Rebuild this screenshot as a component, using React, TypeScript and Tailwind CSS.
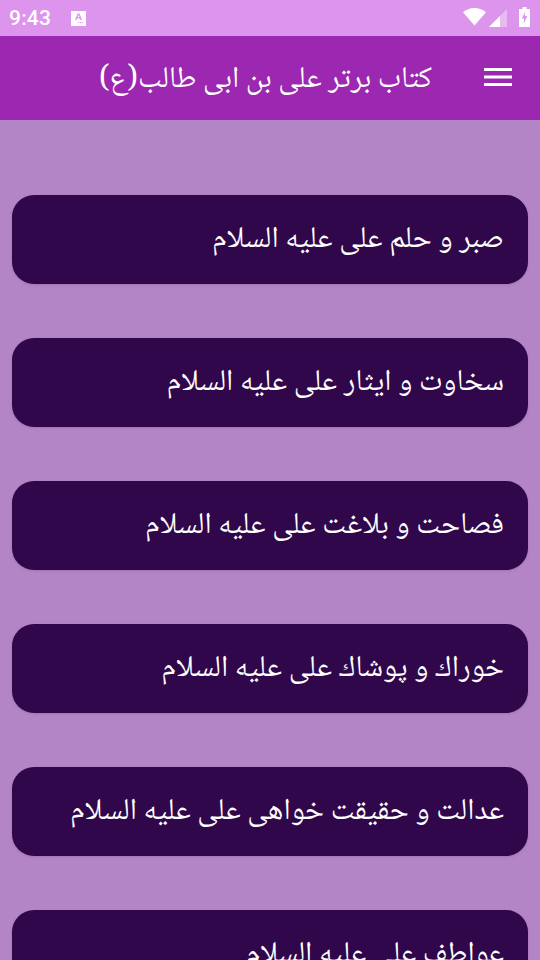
const items = [
  "صبر و حلم علی علیه السلام",
  "سخاوت و ایثار علی علیه السلام",
  "فصاحت و بلاغت علی علیه السلام",
  "خوراك و پوشاك علی علیه السلام",
  "عدالت و حقیقت خواهی علی علیه السلام",
  "عواطف علی علیه السلام",
];

export default function App() {
  return (
    <div className="h-[960px] w-[540px] overflow-hidden bg-[#b485c6] font-['Noto_Naskh_Arabic','DejaVu_Sans',serif]">
      <div className="flex h-9 items-center justify-between bg-[#dd94ec] pl-[9px] pr-[10px] text-white">
        <div className="flex items-center">
          <span className="font-['Roboto',sans-serif] text-[21px] font-medium leading-none tracking-[0.2px]">9:43</span>
          <svg width="15" height="16" viewBox="0 0 15 16" className="ml-[20px]">
            <path fill="#fff" d="M0 1h15v15H0z" />
            <path fill="#dd94ec" d="M6.500 3.500h2L11 10H9.500L9 8.600H6L5.500 10H4zM6.500 7.300h2L7.500 4.800z" />
            <path fill="#dd94ec" d="M7 12h1v1H7zM9 12h1v1H9zM11 12h1v1h-1z" />
          </svg>
        </div>
        <div className="flex items-center">
          <svg width="23" height="18" viewBox="0 0 23 18" className="mb-[2px]">
            <path fill="#fff" d="M11.500 17.500 0 4.300C3 1.700 7 0 11.500 0S20 1.700 23 4.300z" />
          </svg>
          <svg width="18" height="18" viewBox="0 0 18 18" className="ml-[3px]">
            <path fill="#fff" fillOpacity="0.35" d="M18 0v18H0z" />
            <path fill="#fff" d="M11 7v11H0z" />
          </svg>
          <svg width="11" height="20" viewBox="0 0 11 20" className="mb-[2px] ml-[12px]">
            <path fill="#fff" d="M3.500 0h4v2H11v18H0V2h3.500z" />
            <path fill="#dd94ec" d="M6.500 4 2.800 11.500h2.400L4.500 17l3.800-8H5.700z" />
          </svg>
        </div>
      </div>
      <header className="flex h-[84px] items-center justify-end bg-[#9c27b0] pr-[28px] text-white">
        <h1 className="pt-[6px] text-[30.1px] font-normal leading-none" dir="rtl">کتاب برتر علی بن ابی طالب(ع)</h1>
        <svg width="28" height="18" viewBox="0 0 28 18" className="mb-[2px] ml-[52px]">
          <path fill="#fff" d="M0 0h28v3H0zM0 7.500h28v3H0zM0 15h28v3H0z" />
        </svg>
      </header>
      <main className="flex flex-col gap-[54px] px-3 pt-[75px]">
        {items.map((t) => (
          <div key={t} dir="rtl" className="flex h-[89px] shrink-0 items-center rounded-[22px] bg-[#30074a] px-6 pt-[4px] text-[30.2px] leading-none text-white shadow-sm">
            {t}
          </div>
        ))}
      </main>
    </div>
  );
}
